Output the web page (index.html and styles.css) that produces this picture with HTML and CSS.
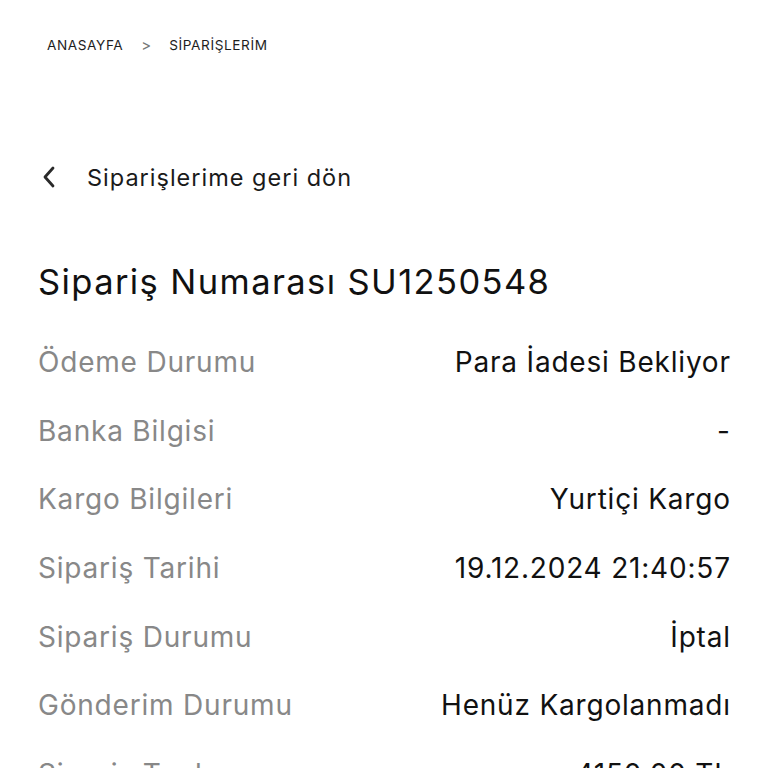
FILE: index.html
```html
<!DOCTYPE html>
<html lang="tr">
<head>
<meta charset="utf-8">
<link rel="stylesheet" href="styles.css">
</head>
<body>
<div class="page">
  <nav class="crumbs">
    <span class="crumb">ANASAYFA</span>
    <span class="sep">&gt;</span>
    <span class="crumb">SİPARİŞLERİM</span>
  </nav>
  <div class="back">
    <svg class="chev" width="16" height="24" viewBox="0 0 16 24"><path d="M12 3 L4 12 L12 21" fill="none" stroke="#2a2a2a" stroke-width="2.8" stroke-linecap="round" stroke-linejoin="round"/></svg>
    <span class="back-text">Siparişlerime geri dön</span>
  </div>
  <h1 class="title">Sipariş Numarası SU1250548</h1>
  <div class="rows">
    <div class="row"><span class="label">Ödeme Durumu</span><span class="value">Para İadesi Bekliyor</span></div>
    <div class="row"><span class="label">Banka Bilgisi</span><span class="value">-</span></div>
    <div class="row"><span class="label">Kargo Bilgileri</span><span class="value">Yurtiçi Kargo</span></div>
    <div class="row"><span class="label">Sipariş Tarihi</span><span class="value">19.12.2024 21:40:57</span></div>
    <div class="row"><span class="label">Sipariş Durumu</span><span class="value">İptal</span></div>
    <div class="row"><span class="label">Gönderim Durumu</span><span class="value">Henüz Kargolanmadı</span></div>
    <div class="row"><span class="label">Sipariş Toplamı</span><span class="value">4150,00 TL</span></div>
  </div>
</div>
</body>
</html>
```
FILE: styles.css
```css
html, body { margin: 0; padding: 0; background: #fff; }
body { font-family: Inter, "Noto Sans", sans-serif; color: #111; overflow: hidden; height: 768px; }
.page { padding: 0 38px; }
.crumbs { display: flex; align-items: center; padding-top: 36px; padding-left: 9px; height: 18px; font-size: 13.6px; color: #1e1e1e; letter-spacing: 0.6px; }
.sep { margin: 0 18px; color: #777; font-size: 15px; letter-spacing: 0; }
.back { display: flex; align-items: center; margin-top: 106px; height: 34px; }
.chev { margin-left: 3px; margin-right: 30px; }
.back-text { font-size: 23.5px; color: #1a1a1a; letter-spacing: 1px; }
.title { margin: 68px 0 0; font-weight: 400; font-size: 34.5px; line-height: 40px; color: #111; letter-spacing: 1.4px; }
.rows { margin-top: 26px; }
.row { display: flex; justify-content: space-between; align-items: center; height: 68.6px; font-size: 28px; letter-spacing: 0.8px; }
.label { color: #888; }
.value { color: #111; margin-right: -0.8px; }
```
